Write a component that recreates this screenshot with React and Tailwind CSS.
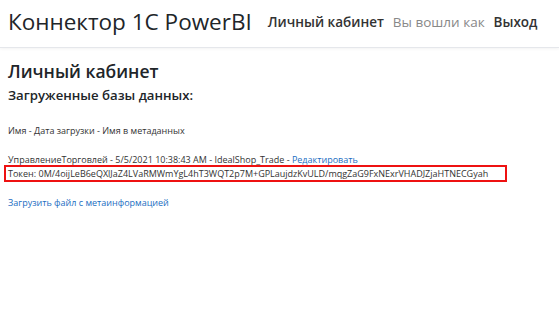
import React from "react";

function App() {
  const token =
    "0M/4oijLeB6eQXlJaZ4LVaRMWmYgL4hT3WQT2p7M+GPLaujdzKvULD/mqgZaG9FxNExrVHADJZjaHTNECGyah";

  return (
    <div className="min-h-screen w-[559px] h-[324px] bg-white text-[#212529] font-['Open_Sans',sans-serif] overflow-hidden">
      <header className="h-[48px] flex items-center border-b border-[#e5e7eb] shadow-[0_1px_3px_rgba(0,0,0,0.05)] pl-[8px]">
        <span className="text-[22.5px] leading-none text-[#212529] mr-[16px] -mt-[3px]">
          Коннектор 1С PowerBI
        </span>
        <nav className="flex items-center gap-[9px] text-[13.5px] -mt-[3px]">
          <a className="font-semibold text-[#333]">Личный кабинет</a>
          <span className="text-[#888]">Вы вошли как</span>
          <a className="font-semibold text-[#333]">Выход</a>
        </nav>
      </header>

      <main className="px-[8px]">
        <h1 className="text-[17.5px] font-semibold leading-none mt-[15px]">Личный кабинет</h1>
        <h2 className="text-[13.2px] font-semibold leading-none mt-[8px]">Загруженные базы данных:</h2>

        <p className="text-[9px] text-[#333] leading-none mt-[24px]">
          Имя - Дата загрузки - Имя в метаданных
        </p>

        <div className="mt-[20px] text-[9px] text-[#333] leading-none">
          <div>
            УправлениеТорговлей - 5/5/2021 10:38:43 AM - IdealShop_Trade -{" "}
            <a className="text-[#1b6ec2]">Редактировать</a>
          </div>
          <div className="-mx-[4px] mt-[1px] w-[503px] h-[17px] border-2 border-[#ee1111] flex items-center px-[2px]">
            Токен: {token}
          </div>
        </div>

        <a className="block mt-[16px] text-[9px] leading-none text-[#1b6ec2]">
          Загрузить файл с метаинформацией
        </a>
      </main>
    </div>
  );
}

export default App;
